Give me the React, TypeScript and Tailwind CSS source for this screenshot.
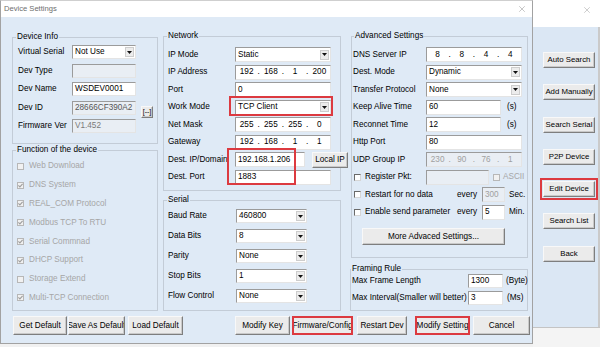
import React from 'react';
import { X } from 'lucide-react';

const sunken =
  'border border-t-[#9b9b9b] border-l-[#9b9b9b] border-r-[#e4e4e4] border-b-[#e4e4e4]';

function Field({ value = '', className = '', disabled = false }: { value?: string; className?: string; disabled?: boolean }) {
  return (
    <div
      className={`h-full shrink-0 flex items-center pl-[2px] ${sunken} ${
        disabled ? 'bg-[#e9eef4] text-[#7a7a7a]' : 'bg-white text-black'
      } ${className}`}
    >
      {value}
    </div>
  );
}

function Select({ value, className = '' }: { value: string; className?: string }) {
  return (
    <div className={`h-full shrink-0 flex items-center bg-white ${sunken} ${className}`}>
      <span className="flex-1 pl-[2px]">{value}</span>
      <span className="w-[9px] h-[10px] mr-[1px] flex items-center justify-center bg-[#ececec] border border-[#cdcdcd]">
        <svg width="5" height="3" viewBox="0 0 5 3">
          <path d="M0 0H5L2.5 3Z" fill="#111" />
        </svg>
      </span>
    </div>
  );
}

function IP({ parts, disabled = false, className = '' }: { parts: string[]; disabled?: boolean; className?: string }) {
  return (
    <div
      className={`h-full shrink-0 flex items-center ${sunken} ${
        disabled ? 'bg-[#e9eef4] text-[#a0a0a0]' : 'bg-white text-black'
      } ${className}`}
    >
      {parts.map((p, i) => (
        <React.Fragment key={i}>
          {i > 0 && <span className="w-[3px] text-center">.</span>}
          <span className="flex-1 text-center">{p}</span>
        </React.Fragment>
      ))}
    </div>
  );
}

function Check({ checked = false, disabled = false }: { checked?: boolean; disabled?: boolean }) {
  return (
    <span
      className={`w-[7px] h-[7px] shrink-0 flex items-center justify-center border ${
        disabled
          ? 'border-[#b7b7b7] bg-[#f1f1f1]'
          : 'border-t-[#6a6a6a] border-l-[#6a6a6a] border-r-[#d6d6d6] border-b-[#d6d6d6] bg-white'
      }`}
    >
      {checked && (
        <svg width="5" height="5" viewBox="0 0 5 5">
          <path d="M0.4 2.4L1.9 3.9L4.6 0.8" stroke={disabled ? '#9d9d9d' : '#111'} strokeWidth="1.1" fill="none" />
        </svg>
      )}
    </span>
  );
}

function Btn({ children, className = '', red = false }: { children: React.ReactNode; className?: string; red?: boolean }) {
  return (
    <button
      className={`shrink-0 flex items-center justify-center overflow-hidden whitespace-nowrap bg-[#ebebeb] text-black ${
        red
          ? 'border-2 border-[#dc3a40]'
          : 'border border-t-[#f8f8f8] border-l-[#f8f8f8] border-r-[#7e7e7e] border-b-[#7e7e7e] shadow-[inset_-1px_-1px_0_#c9c9c9]'
      } ${className}`}
    >
      {children}
    </button>
  );
}

const functions = [
  { name: 'Web Download', checked: false },
  { name: 'DNS System', checked: true },
  { name: 'REAL_COM Protocol', checked: true },
  { name: 'Modbus TCP To RTU', checked: true },
  { name: 'Serial Commnad', checked: true },
  { name: 'DHCP Support', checked: true },
  { name: 'Storage Extend', checked: false },
  { name: 'Multi-TCP Connection', checked: true },
];

const serial = [
  ['Baud Rate', '460800'],
  ['Data Bits', '8'],
  ['Parity', 'None'],
  ['Stop Bits', '1'],
  ['Flow Control', 'None'],
];

const sideButtons = ['Auto Search', 'Add Manually', 'Search Serial', 'P2P Device', 'Edit Device', 'Search List', 'Back'];

export default function App() {
  return (
    <div className="w-[600px] h-[347px] overflow-hidden flex bg-[#f1f1f1] font-['Liberation_Sans',Arial,sans-serif] text-[8.2px] leading-[10px] text-black whitespace-nowrap">
      {/* Device Settings dialog */}
      <div className="w-[533px] h-[344px] shrink-0 flex flex-col bg-[#dfeaf6] border border-[#a2a2a2] border-t-[#cfcfcf]">
        <div className="h-[16px] shrink-0 bg-white flex items-center justify-between pl-[3px] pr-[5px]">
          <span className="text-[7.6px] text-[#6e6e6e]">Device Settings</span>
          <X size={10} strokeWidth={1} color="#777" />
        </div>

        <div className="flex items-start pl-[11px]">
          {/* left column */}
          <div className="w-[146px] shrink-0 mt-[15px] flex flex-col">
            <fieldset className="h-[112px] min-w-0 border border-[#c3ccd7]">
              <legend className="ml-[3px] px-[1px] leading-[10px]">Device Info</legend>
              <div className="pt-[3px] pl-[5px] flex flex-col gap-[4.5px]">
                <div className="h-[14px] flex items-center">
                  <span className="w-[54px] shrink-0">Virtual Serial</span>
                  <Select value="Not Use" className="w-[64px]" />
                </div>
                <div className="h-[14px] flex items-center">
                  <span className="w-[54px] shrink-0">Dev Type</span>
                  <Field disabled className="w-[64px]" />
                </div>
                <div className="h-[14px] flex items-center">
                  <span className="w-[54px] shrink-0">Dev Name</span>
                  <Field value="WSDEV0001" className="w-[64px]" />
                </div>
                <div className="h-[14px] flex items-center">
                  <span className="w-[54px] shrink-0">Dev ID</span>
                  <Field value="28666CF390A2" disabled className="w-[64px] text-[#555]" />
                  <Btn className="ml-[5px] w-[12px] h-[12px] self-start mt-[5px] text-[7px]">[--]</Btn>
                </div>
                <div className="h-[14px] flex items-center">
                  <span className="w-[54px] shrink-0">Firmware Ver</span>
                  <Field value="V1.452" disabled className="w-[64px]" />
                </div>
              </div>
            </fieldset>

            <fieldset className="mt-[1px] h-[166px] min-w-0 border border-[#c3ccd7]">
              <legend className="ml-[3px] px-[1px] leading-[10px]">Function of the device</legend>
              <div className="pt-[2px] pl-[4px] flex flex-col">
                {functions.map((f) => (
                  <div key={f.name} className="h-[18.8px] flex items-center gap-[5px] text-[#a6a6a6]">
                    <Check checked={f.checked} disabled />
                    <span>{f.name}</span>
                  </div>
                ))}
              </div>
            </fieldset>
          </div>

          {/* middle column */}
          <div className="w-[178px] shrink-0 ml-[5px] mt-[14px] flex flex-col">
            <fieldset className="h-[160px] min-w-0 border border-[#c3ccd7]">
              <legend className="ml-[3px] px-[1px] leading-[10px]">Network</legend>
              <div className="pt-[6px] pl-[4px] flex flex-col gap-[2.5px]">
                <div className="h-[15px] flex items-center">
                  <span className="w-[67px] shrink-0">IP Mode</span>
                  <Select value="Static" className="w-[96px]" />
                </div>
                <div className="h-[15px] flex items-center">
                  <span className="w-[67px] shrink-0">IP Address</span>
                  <IP parts={['192', '168', '1', '200']} className="w-[96px]" />
                </div>
                <div className="h-[15px] flex items-center">
                  <span className="w-[67px] shrink-0">Port</span>
                  <Field value="0" className="w-[96px]" />
                </div>
                <div className="h-[15px] flex items-center">
                  <span className="w-[67px] shrink-0">Work Mode</span>
                  <div className="relative h-full">
                    <Select value="TCP Client" className="w-[96px]" />
                    <div className="absolute left-[-6px] top-[-4px] w-[104px] h-[20px] border-2 border-[#dc3a40]" />
                  </div>
                </div>
                <div className="h-[15px] flex items-center">
                  <span className="w-[67px] shrink-0">Net Mask</span>
                  <IP parts={['255', '255', '255', '0']} className="w-[96px]" />
                </div>
                <div className="h-[15px] flex items-center">
                  <span className="w-[67px] shrink-0">Gateway</span>
                  <IP parts={['192', '168', '1', '1']} className="w-[96px]" />
                </div>
                <div className="relative flex flex-col gap-[2.5px]">
                  <div className="h-[15px] flex items-center">
                    <span className="w-[67px] shrink-0">Dest. IP/Domain</span>
                    <Field value="192.168.1.206" className="w-[70px]" />
                    <Btn className="ml-[7px] w-[36px] h-[16px]">Local IP</Btn>
                  </div>
                  <div className="h-[15px] flex items-center">
                    <span className="w-[67px] shrink-0">Dest. Port</span>
                    <Field value="1883" className="w-[96px]" />
                  </div>
                  <div className="absolute left-[59px] top-[-4px] w-[69px] h-[37px] border-2 border-[#dc3a40]" />
                </div>
              </div>
            </fieldset>

            <fieldset className="mt-[4px] h-[116px] min-w-0 border border-[#c3ccd7]">
              <legend className="ml-[3px] px-[1px] leading-[10px]">Serial</legend>
              <div className="pt-[4px] pl-[4px] flex flex-col gap-[6px]">
                {serial.map(([k, v]) => (
                  <div key={k} className="h-[14px] flex items-center">
                    <span className="w-[68px] shrink-0">{k}</span>
                    <Select value={v} className="w-[71px]" />
                  </div>
                ))}
              </div>
            </fieldset>
          </div>

          {/* right column */}
          <div className="w-[178px] shrink-0 ml-[9px] mt-[14px] flex flex-col">
            <fieldset className="ml-[1px] h-[227px] min-w-0 border border-[#c3ccd7]">
              <legend className="ml-[2px] px-[1px] leading-[10px]">Advanced Settings</legend>
              <div className="pt-[6px] pl-[1px] flex flex-col gap-[2.5px]">
                <div className="h-[15px] flex items-center">
                  <span className="w-[73px] shrink-0">DNS Server IP</span>
                  <IP parts={['8', '8', '4', '4']} className="w-[96px]" />
                </div>
                <div className="h-[15px] flex items-center">
                  <span className="w-[73px] shrink-0">Dest. Mode</span>
                  <Select value="Dynamic" className="w-[96px]" />
                </div>
                <div className="h-[15px] flex items-center">
                  <span className="w-[73px] shrink-0">Transfer Protocol</span>
                  <Select value="None" className="w-[96px]" />
                </div>
                <div className="h-[15px] flex items-center">
                  <span className="w-[73px] shrink-0">Keep Alive Time</span>
                  <Field value="60" className="w-[75px]" />
                  <span className="ml-[6px]">(s)</span>
                </div>
                <div className="h-[15px] flex items-center">
                  <span className="w-[73px] shrink-0">Reconnet Time</span>
                  <Field value="12" className="w-[75px]" />
                  <span className="ml-[6px]">(s)</span>
                </div>
                <div className="h-[15px] flex items-center">
                  <span className="w-[73px] shrink-0">Http Port</span>
                  <Field value="80" className="w-[96px]" />
                </div>
                <div className="h-[15px] flex items-center">
                  <span className="w-[73px] shrink-0">UDP Group IP</span>
                  <IP parts={['230', '90', '76', '1']} disabled className="w-[96px]" />
                </div>
                <div className="h-[15px] flex items-center">
                  <span className="w-[72px] shrink-0 ml-[1px] flex items-center gap-[4px]">
                    <Check />
                    Register Pkt:
                  </span>
                  <Field disabled className="w-[63px]" />
                  <span className="ml-[4px] flex items-center gap-[3px] text-[#a6a6a6]">
                    <Check disabled />
                    ASCII
                  </span>
                </div>
                <div className="h-[15px] flex items-center">
                  <span className="w-[103px] shrink-0 ml-[1px] flex items-center gap-[4px]">
                    <Check />
                    Restart for no data
                  </span>
                  <span className="w-[25px] shrink-0">every</span>
                  <Field value="300" disabled className="w-[23px] text-[#a0a0a0]" />
                  <span className="ml-[4px]">Sec.</span>
                </div>
                <div className="h-[15px] flex items-center">
                  <span className="w-[103px] shrink-0 ml-[1px] flex items-center gap-[4px]">
                    <Check />
                    Enable send parameter
                  </span>
                  <span className="w-[25px] shrink-0">every</span>
                  <Field value="5" className="w-[23px]" />
                  <span className="ml-[4px]">Min.</span>
                </div>
                <Btn className="mt-[6px] ml-[9px] w-[143px] h-[17px]">More Advaced Settings...</Btn>
              </div>
            </fieldset>

            <fieldset className="mt-[6px] h-[47px] min-w-0 border border-[#c3ccd7]">
              <legend className="px-[1px] leading-[10px]">Framing Rule</legend>
              <div className="pl-[1px] flex flex-col gap-[3px]">
                <div className="h-[14px] flex items-center">
                  <span className="w-[116px] shrink-0">Max Frame Length</span>
                  <Field value="1300" className="w-[35px]" />
                  <span className="ml-[3px]">(Byte)</span>
                </div>
                <div className="h-[14px] flex items-center">
                  <span className="w-[116px] shrink-0">Max Interval(Smaller will better)</span>
                  <Field value="3" className="w-[35px]" />
                  <span className="ml-[4px]">(Ms)</span>
                </div>
              </div>
            </fieldset>
          </div>
        </div>

        {/* dialog buttons */}
        <div className="mt-[5px] pl-[12px] h-[19px] flex">
          <Btn className="w-[54px]">Get Default</Btn>
          <Btn className="ml-[1px] w-[57px]">Save As Default</Btn>
          <Btn className="ml-[3px] w-[55px]">Load Default</Btn>
          <Btn className="ml-[52px] w-[55px]">Modify Key</Btn>
          <Btn red className="ml-[2px] w-[61px]">Firmware/Config</Btn>
          <Btn className="ml-[4px] w-[50px]">Restart Dev</Btn>
          <Btn red className="ml-[8px] w-[55px]">Modify Setting</Btn>
          <Btn className="ml-[3px] w-[57px]">Cancel</Btn>
        </div>
      </div>

      {/* main window behind */}
      <div className="flex-1 flex flex-col">
        <div className="h-[27px] shrink-0 bg-white flex justify-end pt-[5px] pr-[8px]">
          <X size={10} strokeWidth={1} color="#888" />
        </div>
        <div className="h-[300px] shrink-0 bg-[#dbe7f4] border-r-2 border-[#cacaca] flex flex-col pt-[25px] pl-[10px] gap-[16.3px]">
          {sideButtons.map((b) => (
            <Btn
              key={b}
              className={`w-[52px] h-[16px] text-[7.8px] ${
                b === 'Edit Device' ? 'outline-2 outline-offset-[1px] outline-[#dc3a40]' : ''
              }`}
            >
              {b}
            </Btn>
          ))}
        </div>
        <div className="flex-1 bg-[#f4f4f4] border-t border-[#c4c4c4]" />
      </div>
    </div>
  );
}
